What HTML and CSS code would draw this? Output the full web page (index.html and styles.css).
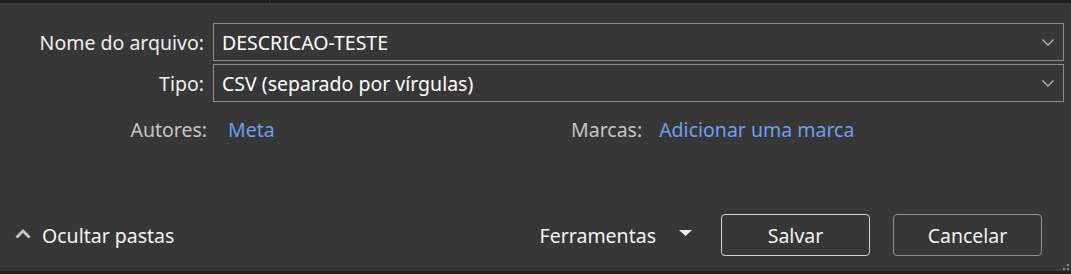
FILE: index.html
```html
<!DOCTYPE html>
<html lang="pt">
<head>
  <meta charset="UTF-8">
  <title>Salvar como</title>
  <link rel="stylesheet" href="styles.css">
</head>
<body>
  <div class="topbar">
    <div class="topbar-left"></div>
    <div class="topbar-split"></div>
    <div class="topbar-right"></div>
  </div>

  <main class="dialog">
    <div class="field-row">
      <label class="field-label">Nome do arquivo:</label>
      <div class="combo">
        <span class="combo-value">DESCRICAO-TESTE</span>
        <svg class="chevron" width="12" height="7" viewBox="0 0 12 7"><path d="M0.5 0.5 L6 6 L11.5 0.5" fill="none" stroke="#b4b4b4" stroke-width="1.3"/></svg>
      </div>
    </div>
    <div class="field-row">
      <label class="field-label">Tipo:</label>
      <div class="combo">
        <span class="combo-value">CSV (separado por vírgulas)</span>
        <svg class="chevron" width="12" height="7" viewBox="0 0 12 7"><path d="M0.5 0.5 L6 6 L11.5 0.5" fill="none" stroke="#b4b4b4" stroke-width="1.3"/></svg>
      </div>
    </div>

    <div class="meta-row">
      <div class="meta meta-authors">
        <span class="meta-label">Autores:</span>
        <a class="meta-link">Meta</a>
      </div>
      <div class="meta meta-tags">
        <span class="meta-label">Marcas:</span>
        <a class="meta-link">Adicionar uma marca</a>
      </div>
    </div>
  </main>

  <footer class="footer">
    <div class="toggle-folders">
      <svg width="16" height="10" viewBox="0 0 16 10"><path d="M1.5 8.5 L8 2 L14.5 8.5" fill="none" stroke="#c8c8c8" stroke-width="2.8"/></svg>
      <span>Ocultar pastas</span>
    </div>
    <div class="actions">
      <div class="tools">
        <span>Ferramentas</span>
        <svg width="13" height="6" viewBox="0 0 13 6"><path d="M0 0 H13 L6.5 6 Z" fill="#f0f0f0"/></svg>
      </div>
      <button class="btn btn-default">Salvar</button>
      <button class="btn">Cancelar</button>
    </div>
    <div class="grip"></div>
  </footer>

  <div class="bottombar"></div>
</body>
</html>
```

FILE: styles.css
```css
html, body {
  height: 100%;
}
body {
  margin: 0;
  background-color: #373737;
  color: #f2f2f2;
  font-family: "Noto Sans", "Open Sans", sans-serif;
  font-size: 19.5px;
  display: flex;
  flex-direction: column;
  overflow: hidden;
}
.topbar {
  display: flex;
  height: 3px;
  background: #1d1d1d;
}
.topbar-left {
  width: 269px;
}
.topbar-split {
  width: 2px;
  background: #2c2c2c;
}
.dialog {
  padding-top: 20px;
}
.field-row {
  display: flex;
  align-items: center;
  margin-bottom: 3px;
}
.field-label {
  width: 204px;
  text-align: right;
  padding-right: 9px;
  color: #ededed;
}
.combo {
  box-sizing: border-box;
  width: 851px;
  height: 38px;
  border: 1px solid #8c8c8c;
  display: flex;
  align-items: center;
  justify-content: space-between;
  padding: 0 9px 0 8px;
}
.combo-value {
  color: #ffffff;
}
.chevron {
  display: block;
}
.meta-row {
  display: flex;
  margin-top: 15px;
  line-height: 26px;
}
.meta {
  display: flex;
}
.meta-authors {
  width: 571px;
}
.meta-authors .meta-label {
  width: 207px;
  text-align: right;
}
.meta-label {
  color: #c4c4c4;
}
.meta-link {
  color: #6b9fec;
  margin-left: 21px;
  cursor: pointer;
}
.meta-tags .meta-link {
  margin-left: 17px;
}
.footer {
  position: relative;
  margin-top: auto;
  display: flex;
  align-items: center;
  justify-content: space-between;
  padding: 0 29px 15px 15px;
}
.toggle-folders {
  display: flex;
  align-items: center;
  gap: 11px;
  color: #f2f2f2;
}
.toggle-folders svg {
  margin-top: -3px;
}
.actions {
  display: flex;
  align-items: center;
}
.tools {
  display: flex;
  align-items: center;
  gap: 23px;
  margin-right: 29px;
}
.tools svg {
  margin-top: -4px;
}
.btn {
  box-sizing: border-box;
  width: 149px;
  height: 42px;
  background: #373737;
  color: #f2f2f2;
  font: inherit;
  border: 1px solid #8e8e8e;
  border-radius: 4px;
  cursor: pointer;
}
.btn-default {
  border-color: #d2d2d2;
  margin-right: 23px;
}
.grip {
  position: absolute;
  right: 2px;
  bottom: 1px;
  width: 6px;
  height: 6px;
  background:
    linear-gradient(#8a8a8a, #8a8a8a) 4px 0 / 2px 2px no-repeat,
    linear-gradient(#8a8a8a, #8a8a8a) 0 4px / 2px 2px no-repeat,
    linear-gradient(#8a8a8a, #8a8a8a) 4px 4px / 2px 2px no-repeat;
}
.bottombar {
  height: 3px;
  background: #202020;
}
```
